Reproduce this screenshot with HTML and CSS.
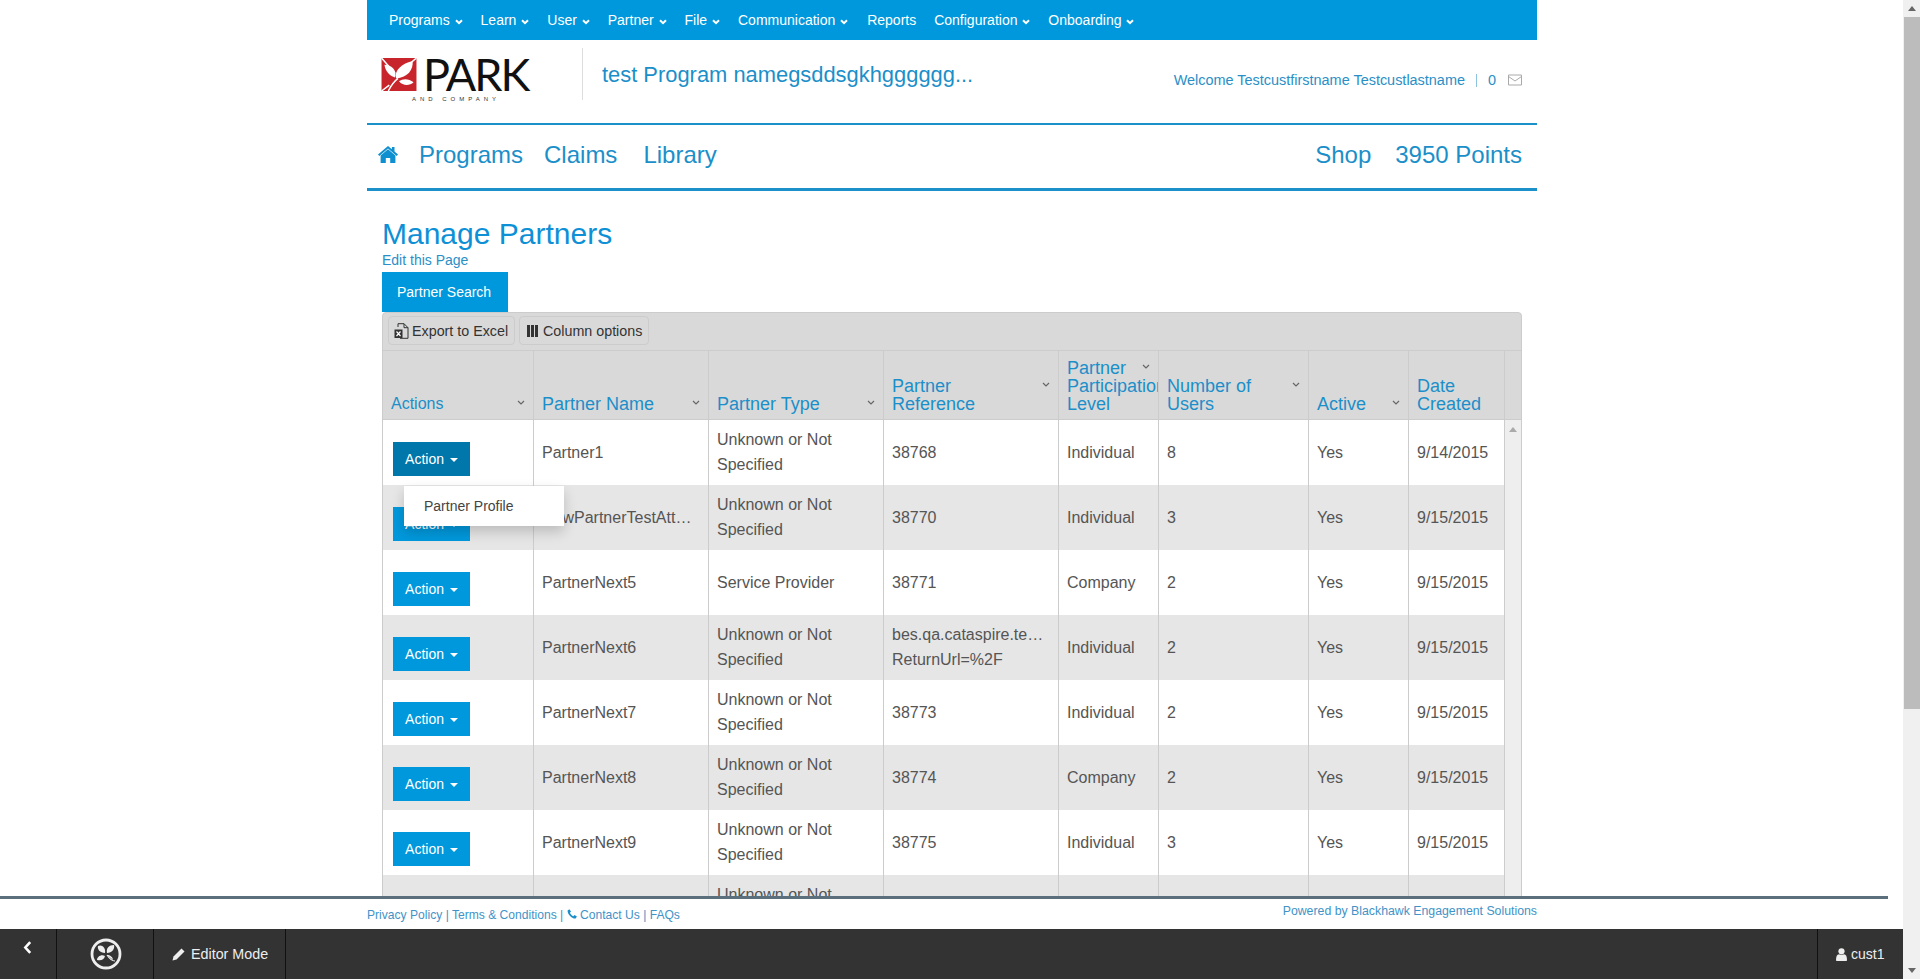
FILE: index.html
```html
<!DOCTYPE html>
<html lang="en">
<head>
  <meta charset="UTF-8">
  <title>Manage Partners</title>
  <link rel="stylesheet" href="styles.css">
</head>
<body>
  <div class="page">
    <div class="topnav">
      <a>Programs <svg class="caret" viewBox="0 0 8 6"><path d="M1 1.2l3 3 3-3"/></svg></a>
      <a>Learn <svg class="caret" viewBox="0 0 8 6"><path d="M1 1.2l3 3 3-3"/></svg></a>
      <a>User <svg class="caret" viewBox="0 0 8 6"><path d="M1 1.2l3 3 3-3"/></svg></a>
      <a>Partner <svg class="caret" viewBox="0 0 8 6"><path d="M1 1.2l3 3 3-3"/></svg></a>
      <a>File <svg class="caret" viewBox="0 0 8 6"><path d="M1 1.2l3 3 3-3"/></svg></a>
      <a>Communication <svg class="caret" viewBox="0 0 8 6"><path d="M1 1.2l3 3 3-3"/></svg></a>
      <a class="nav-reports">Reports</a>
      <a>Configuration <svg class="caret" viewBox="0 0 8 6"><path d="M1 1.2l3 3 3-3"/></svg></a>
      <a>Onboarding <svg class="caret" viewBox="0 0 8 6"><path d="M1 1.2l3 3 3-3"/></svg></a>
    </div>

    <div class="brandbar">
      <div class="logo">
        <div class="logo-row">
          <svg class="logo-mark" viewBox="0 0 36 34">
            <rect width="36" height="34" fill="#c8242b"/>
            <path d="M0 0l14 16M36 0L22 12M0 34l8-6" stroke="#fff" stroke-width="1.500"/>
            <path d="M7 34c3-6 6-10 10-13" fill="none" stroke="#fff" stroke-width="1.500"/>
            <path d="M15 21C13 13 20 6 32 3c1 9-5 17-17 18zM14 20C9 19 4 14 3 7c7 0 13 5 11 13zM18 24c4-3 10-3 15 1-4 4-11 4-15-1z" fill="#fff"/>
          </svg>
          <div class="logo-name">PARK</div>
        </div>
        <div class="logo-sub">AND COMPANY</div>
      </div>
      <div class="program-name">test Program namegsddsgkhgggggg...</div>
      <div class="welcome">
        <span>Welcome Testcustfirstname Testcustlastname</span>
        <span class="sep"></span>
        <span>0</span>
        <svg class="mail" viewBox="0 0 14 12"><path d="M.5 1h13v10H.5zM.5 2.500L7 7l6.500-4.500" fill="none" stroke="#aaa"/></svg>
      </div>
    </div>

    <div class="mainnav">
      <svg class="home" viewBox="0 0 20 18"><path d="M10 3.200L2.600 9.400V17h5.200v-5h4.400v5h5.200V9.400z"/><path d="M10 0L0 8.400l1.300 1.500L10 2.600l8.700 7.300L20 8.400l-3.500-3V1h-2.600v2.200z"/></svg>
      <a class="nav-programs">Programs</a>
      <a class="nav-claims">Claims</a>
      <a class="nav-library">Library</a>
      <a class="nav-shop">Shop</a>
      <a class="nav-points">3950 Points</a>
    </div>

    <div class="content">
      <h1>Manage Partners</h1>
      <a class="edit-link">Edit this Page</a>
      <div class="tab">Partner Search</div>

      <div class="grid">
        <div class="toolbar">
          <button class="tool">
            <svg class="tool-icon" viewBox="0 0 15 16"><path d="M4 4V.7h6l4 4v10.600H6" fill="none" stroke="#333"/><path d="M10 .7v4h4" fill="none" stroke="#333"/><rect x=".5" y="6.500" width="8" height="8.500" fill="#333"/><path d="M2.500 8.500l4 4.500M6.500 8.500l-4 4.500" stroke="#fff" stroke-width="1.200"/></svg>
            Export to Excel
          </button>
          <button class="tool tool-cols">
            <svg class="tool-icon" viewBox="0 0 11 12"><path d="M0 0h3v12H0zM4 0h3v12H4zM8 0h3v12H8z" fill="#333"/></svg>
            Column options
          </button>
        </div>

        <table>
          <colgroup>
            <col class="c-actions"><col class="c-name"><col class="c-type"><col class="c-ref"><col class="c-level"><col class="c-users"><col class="c-active"><col class="c-date"><col class="c-scroll">
          </colgroup>
          <thead>
            <tr>
              <th class="th-small"><svg class="chev" viewBox="0 0 8 6"><path d="M1 1l3 3 3-3"/></svg>Actions</th>
              <th><svg class="chev" viewBox="0 0 8 6"><path d="M1 1l3 3 3-3"/></svg>Partner Name</th>
              <th><svg class="chev" viewBox="0 0 8 6"><path d="M1 1l3 3 3-3"/></svg>Partner Type</th>
              <th><svg class="chev" viewBox="0 0 8 6"><path d="M1 1l3 3 3-3"/></svg>Partner<br>Reference</th>
              <th><svg class="chev" viewBox="0 0 8 6"><path d="M1 1l3 3 3-3"/></svg>Partner<br>Participation<br>Level</th>
              <th><svg class="chev" viewBox="0 0 8 6"><path d="M1 1l3 3 3-3"/></svg>Number of<br>Users</th>
              <th><svg class="chev" viewBox="0 0 8 6"><path d="M1 1l3 3 3-3"/></svg>Active</th>
              <th>Date<br>Created</th>
              <th></th>
            </tr>
          </thead>
          <tbody>
            <tr>
              <td class="td-action"><button class="action action-open">Action <i class="drop"></i></button></td>
              <td>Partner1</td><td>Unknown or Not Specified</td><td>38768</td><td>Individual</td><td>8</td><td>Yes</td><td>9/14/2015</td>
              <td class="scroll-cell" rowspan="8"><svg class="scroll-up" viewBox="0 0 8 5"><path d="M4 0l4 5H0z"/></svg></td>
            </tr>
            <tr class="alt">
              <td class="td-action"><button class="action">Action <i class="drop"></i></button></td>
              <td><div class="clip">NewPartnerTestAttachment</div></td><td>Unknown or Not Specified</td><td>38770</td><td>Individual</td><td>3</td><td>Yes</td><td>9/15/2015</td>
            </tr>
            <tr>
              <td class="td-action"><button class="action">Action <i class="drop"></i></button></td>
              <td>PartnerNext5</td><td>Service Provider</td><td>38771</td><td>Company</td><td>2</td><td>Yes</td><td>9/15/2015</td>
            </tr>
            <tr class="alt">
              <td class="td-action"><button class="action">Action <i class="drop"></i></button></td>
              <td>PartnerNext6</td><td>Unknown or Not Specified</td><td><div class="clip">bes.qa.cataspire.test/Account</div><div>ReturnUrl=%2F</div></td><td>Individual</td><td>2</td><td>Yes</td><td>9/15/2015</td>
            </tr>
            <tr>
              <td class="td-action"><button class="action">Action <i class="drop"></i></button></td>
              <td>PartnerNext7</td><td>Unknown or Not Specified</td><td>38773</td><td>Individual</td><td>2</td><td>Yes</td><td>9/15/2015</td>
            </tr>
            <tr class="alt">
              <td class="td-action"><button class="action">Action <i class="drop"></i></button></td>
              <td>PartnerNext8</td><td>Unknown or Not Specified</td><td>38774</td><td>Company</td><td>2</td><td>Yes</td><td>9/15/2015</td>
            </tr>
            <tr>
              <td class="td-action"><button class="action">Action <i class="drop"></i></button></td>
              <td>PartnerNext9</td><td>Unknown or Not Specified</td><td>38775</td><td>Individual</td><td>3</td><td>Yes</td><td>9/15/2015</td>
            </tr>
            <tr class="alt">
              <td class="td-action"></td>
              <td></td><td>Unknown or Not Specified</td><td></td><td></td><td></td><td></td><td></td>
            </tr>
          </tbody>
        </table>

        <div class="menu">Partner Profile</div>
      </div>
    </div>
  </div>

  <div class="footer">
    <div class="footer-links">
      <div class="footer-inner">
        <span class="links">Privacy Policy | Terms &amp; Conditions | <svg class="phone" viewBox="0 0 10 10"><path d="M2.400.3L.6 1.400C.2 4.800 5 10 8.700 9.500L9.900 7.600 7.500 6 6.300 7.200C5 6.600 3.400 5 2.900 3.700L4 2.600z"/></svg> Contact Us | FAQs</span>
        <span class="powered">Powered by Blackhawk Engagement Solutions</span>
      </div>
    </div>
    <div class="adminbar">
      <div class="admin-cell back"><svg viewBox="0 0 8 12"><path d="M6.500 1L2 6l4.500 5" fill="none" stroke="#fff" stroke-width="2.400"/></svg></div>
      <div class="admin-cell brand">
        <svg viewBox="0 0 32 32">
          <circle cx="16" cy="16" r="14" fill="none" stroke="#eee" stroke-width="2.800"/>
          <path d="M15 15C10 15 7 11 8 8c4-2 8 2 7 7zM17 15c-1-5 2-8 7-8 1 4-2 8-7 8zM15 18c-1 4-4 5-8 4 0-3 4-6 8-4zM17 17c3 0 6 2 6 5" fill="#eee"/>
          <path d="M17 17c2 3 5 6 8 6" fill="none" stroke="#eee" stroke-width="1.200"/>
        </svg>
      </div>
      <div class="admin-cell editor">
        <svg viewBox="0 0 13 13"><path d="M9.500.5l3 3-8 8-4 1 1-4z" fill="#eee"/></svg>
        Editor Mode
      </div>
      <div class="admin-cell user">
        <svg viewBox="0 0 11 13"><circle cx="5.500" cy="3.300" r="3.100" fill="#eee"/><path d="M0 12.200c0-4 1-5.700 3-6 1.500 1 3.500 1 5 0 2 .3 3 2 3 6 0 .5-.5.800-1 .800H1c-.5 0-1-.3-1-.8z" fill="#eee"/></svg>
        cust1
      </div>
    </div>
  </div>

  <div class="scrollbar">
    <svg class="sb-arrow" viewBox="0 0 8 5"><path d="M4 0l4 5H0z"/></svg>
    <div class="sb-thumb"></div>
    <svg class="sb-arrow sb-down" viewBox="0 0 8 5"><path d="M4 5l4-5H0z"/></svg>
  </div>
</body>
</html>
```

FILE: styles.css
```css
* { box-sizing: border-box; }
html, body { height: 100%; }
body { margin: 0; overflow: hidden; background: #fff; font-family: "Liberation Sans", Arial, sans-serif; font-size: 14px; color: #555; }
a { color: inherit; text-decoration: none; }

.page { width: 1170px; margin-left: 367px; }

.topnav { display: flex; align-items: center; gap: 18px; height: 40px; padding-left: 22px; background: #0098dc; color: #fff; font-size: 14px; }
.topnav a { white-space: nowrap; }
.nav-reports { margin-left: 1px; }
.caret { width: 8px; height: 6px; margin-left: 1px; }
.caret path { fill: none; stroke: #fff; stroke-width: 2; }

.brandbar { display: flex; height: 85px; border-bottom: 2px solid #1b90c9; }
.logo { display: flex; flex-direction: column; width: 216px; height: 52px; margin-top: 8px; padding: 10px 0 0 14px; border-right: 1px solid #ddd; }
.logo-row { display: flex; height: 33px; }
.logo-mark { width: 36px; height: 33px; }
.logo-name { height: 33px; margin-left: 6px; color: #111; font-family: "Lato", sans-serif; font-size: 45px; font-weight: 400; line-height: 33px; letter-spacing: -2px; }
.logo-sub { width: 150px; margin-top: 5px; color: #333; font-size: 6px; line-height: 7px; letter-spacing: 4px; text-align: center; white-space: nowrap; }
.program-name { width: 375px; padding: 22px 0 0 19px; color: #1b8fc9; font-size: 21.900px; white-space: nowrap; }
.welcome { display: flex; align-items: center; height: 14px; margin: 33px 0 0 auto; padding-right: 15px; color: #2a8fc7; font-size: 14.450px; }
.sep { width: 1px; height: 13px; margin: 0 11px; background: #8cc4e0; }
.mail { width: 14px; height: 12px; margin-left: 12px; }

.mainnav { display: flex; align-items: center; height: 66px; padding: 0 15px 4px 11px; border-bottom: 3px solid #1b90c9; color: #1b8fc9; font-size: 24px; }
.home { width: 20px; height: 18px; fill: #0e8fd0; margin-right: 21px; }
.nav-claims { margin-left: 21px; }
.nav-library { margin-left: 26px; }
.nav-shop { margin-left: auto; }
.nav-points { margin-left: 24px; }

.content { height: 800px; padding: 0 15px; }
h1 { margin: 0; padding-top: 26px; font-size: 30px; font-weight: normal; line-height: 33px; color: #0d90d6; }
.edit-link { display: block; height: 22px; color: #2a8fc7; line-height: 21px; }
.tab { display: flex; align-items: center; width: 126px; height: 40px; padding-left: 15px; background: #0098dc; color: #fff; }

.grid { position: relative; border: 1px solid #ccc; border-radius: 4px 4px 0 0; background: #d9d9d9; }
.toolbar { display: flex; gap: 4px; height: 38px; padding: 3px 0 0 5px; border-bottom: 1px solid #ccc; }
.tool { display: flex; align-items: center; gap: 3px; height: 29px; width: 127px; padding: 0 0 0 5px; border: 1px solid #ccc; border-radius: 4px; background: #d9d9d9; color: #333; font: 14.300px "Liberation Sans", sans-serif; white-space: nowrap; }
.tool-icon { flex: none; width: 15px; height: 16px; }
.tool-cols { gap: 5px; width: 130px; padding-left: 7px; }
.tool-cols .tool-icon { width: 11px; height: 12px; }

table { width: 1138px; border-collapse: separate; border-spacing: 0; table-layout: fixed; }
.c-actions { width: 150px; }
.c-name, .c-type, .c-ref { width: 175px; }
.c-level { width: 100px; }
.c-users { width: 150px; }
.c-active { width: 100px; }
.c-date { width: 96px; }
.c-scroll { width: 17px; }
th { height: 69px; padding: 0 0 6px 8px; overflow: hidden; border-left: 1px solid #ccc; border-bottom: 1px solid #ccc; color: #1b8fc9; font-size: 18px; font-weight: normal; line-height: 18px; text-align: left; vertical-align: bottom; white-space: nowrap; }
th:first-child { border-left: 0; }
.th-small { font-size: 16px; }
.chev { float: right; width: 8px; height: 6px; margin: 5px 8px 0 0; }
.chev path { fill: none; stroke: #666; stroke-width: 1.200; }
td { height: 65px; padding: 0 9px 1px 8px; border-left: 1px solid #ccc; background: #fff; font-size: 16px; line-height: 25px; vertical-align: middle; }
td:first-child { border-left: 0; }
.alt td { background: #e6e6e6; }
.td-action { padding: 22px 0 0 10px; vertical-align: top; }
.clip { overflow: hidden; white-space: nowrap; text-overflow: ellipsis; }
td.scroll-cell { padding: 7px 0 0 4px; background: #eee; vertical-align: top; }
.scroll-up { display: block; width: 8px; height: 5px; fill: #aaa; }

.action { display: block; width: 77px; height: 34px; padding: 0; border: 0; background: #0098dc; color: #fff; font: 14px "Liberation Sans", sans-serif; }
.action-open { background: #0077aa; }
.drop { display: inline-block; margin-left: 2px; vertical-align: middle; border-top: 4px solid #fff; border-left: 4px solid transparent; border-right: 4px solid transparent; }

.menu { position: absolute; top: 173px; left: 21px; width: 160px; height: 40px; padding-left: 20px; background: #fff; box-shadow: 0 6px 12px rgba(0,0,0,.18); color: #444; font-size: 14px; line-height: 40px; }

.footer { position: fixed; left: 0; right: 17px; bottom: 0; }
.footer-links { height: 33px; background: #fff; }
.footer-links::before { content: ""; display: block; height: 3px; width: 1888px; background: #5c6f7c; }
.footer-inner { display: flex; justify-content: space-between; width: 1170px; margin-left: 367px; color: #3f93c7; font-size: 12.300px; }
.links { padding-top: 9px; font-size: 12.100px; }
.powered { padding-top: 5px; }
.phone { width: 10px; height: 10px; fill: #1b8fc9; }
.adminbar { display: flex; height: 50px; background: #333; color: #eee; font-size: 14px; }
.admin-cell { display: flex; align-items: center; height: 50px; border-right: 1px solid #111; }
.back { justify-content: center; width: 57px; padding: 0 2px 14px 0; }
.back svg { width: 9px; height: 13px; }
.brand { justify-content: center; width: 97px; padding-left: 1px; }
.brand svg { width: 32px; height: 32px; }
.editor { gap: 6px; width: 132px; padding-left: 18px; font-size: 14.300px; }
.editor svg { width: 13px; height: 13px; }
.user { gap: 4px; margin-left: auto; width: 86px; padding-left: 18px; border-right: 0; border-left: 1px solid #111; }
.user svg { width: 11px; height: 13px; }

.scrollbar { position: fixed; top: 0; right: 0; bottom: 0; width: 17px; background: #f0f0f0; }
.sb-arrow { position: absolute; top: 6px; left: 5px; width: 8px; height: 5px; fill: #666; }
.sb-down { top: auto; bottom: 6px; }
.sb-thumb { position: absolute; top: 17px; left: 1px; right: 0; height: 692px; background: #bcbcbc; }
```
